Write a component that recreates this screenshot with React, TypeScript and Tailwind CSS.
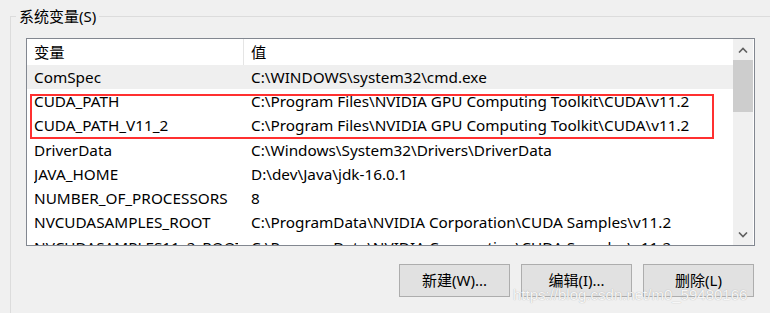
import { ReactNode } from "react";

const rows = [
  { name: "ComSpec", value: "C:\\WINDOWS\\system32\\cmd.exe", selected: true },
  { name: "CUDA_PATH", value: "C:\\Program Files\\NVIDIA GPU Computing Toolkit\\CUDA\\v11.2" },
  { name: "CUDA_PATH_V11_2", value: "C:\\Program Files\\NVIDIA GPU Computing Toolkit\\CUDA\\v11.2" },
  { name: "DriverData", value: "C:\\Windows\\System32\\Drivers\\DriverData" },
  { name: "JAVA_HOME", value: "D:\\dev\\Java\\jdk-16.0.1" },
  { name: "NUMBER_OF_PROCESSORS", value: "8" },
  { name: "NVCUDASAMPLES_ROOT", value: "C:\\ProgramData\\NVIDIA Corporation\\CUDA Samples\\v11.2" },
  { name: "NVCUDASAMPLES11_2_ROOT", value: "C:\\ProgramData\\NVIDIA Corporation\\CUDA Samples\\v11.2" },
];

function Button({ children }: { children: ReactNode }) {
  return (
    <button className="flex h-[33px] w-[111px] items-center justify-center border border-[#adadad] bg-[#e1e1e1] text-[15px] text-black">
      {children}
    </button>
  );
}

function Chevron({ up }: { up?: boolean }) {
  return (
    <svg width="10" height="6" viewBox="0 0 10 6" className={up ? "" : "rotate-180"}>
      <path d="M1 5.5 L5 1.5 L9 5.5" fill="none" stroke="#606060" strokeWidth="1.6" />
    </svg>
  );
}

export default function App() {
  return (
    <div
      className="relative h-[313px] w-[770px] overflow-hidden bg-[#f0f0f0] pl-[10px] pt-[16px] text-black"
      style={{ fontFamily: '"Noto Sans", "Noto Sans CJK SC", sans-serif' }}
    >
      {/* group box */}
      <div className="relative h-full border-l border-t border-[#dcdcdc] pl-[15px] pt-[21px]">
        <span className="absolute -top-[11px] left-[5px] bg-[#f0f0f0] px-[3px] text-[15px] leading-[20px]">
          系统变量(S)
        </span>

        <div className="w-[729px]">
          {/* list */}
          <div className="relative flex h-[208px] border border-[#828790] bg-white">
            <div className="flex-1 overflow-hidden">
              <div className="flex h-[26px] items-center text-[15.3px]">
                <div className="flex h-full w-[217px] items-center border-r border-[#e5e5e5] pl-[7px]">变量</div>
                <div className="pl-[7px]">值</div>
              </div>
              {rows.map((r) => (
                <div
                  key={r.name}
                  className={`flex h-[24.3px] items-center whitespace-nowrap text-[15.3px] ${r.selected ? "bg-[#efefef]" : ""}`}
                >
                  <div className="w-[217px] shrink-0 pl-[7px] pr-[6px]">
                    <div className="overflow-hidden">{r.name}</div>
                  </div>
                  <div className="pl-[7px]">{r.value}</div>
                </div>
              ))}
            </div>

            {/* scrollbar */}
            <div className="mr-[1px] flex w-[20px] flex-col bg-[#f0f0f0]">
              <div className="flex h-[21px] items-center justify-center">
                <Chevron up />
              </div>
              <div className="h-[52px] bg-[#cdcdcd]" />
              <div className="flex-1" />
              <div className="flex h-[21px] items-center justify-center">
                <Chevron />
              </div>
            </div>

            {/* red annotation */}
            <div className="absolute left-[3px] top-[55px] h-[45px] w-[684px] border-2 border-[#ff3030]" />
          </div>

          {/* buttons */}
          <div className="mt-[18px] mr-[1px] flex justify-end gap-[11px]">
            <Button>新建(W)...</Button>
            <Button>编辑(I)...</Button>
            <Button>删除(L)</Button>
          </div>
        </div>
      </div>

      {/* watermark */}
      <div
        className="absolute left-[513px] top-[284px] text-[15px] text-white/90 [text-shadow:0_0_1px_#9a9a9a]"
        style={{ fontFamily: '"Liberation Sans", Arial, sans-serif' }}
      >
        https://blog.csdn.net/m0_59480166
      </div>
    </div>
  );
}
